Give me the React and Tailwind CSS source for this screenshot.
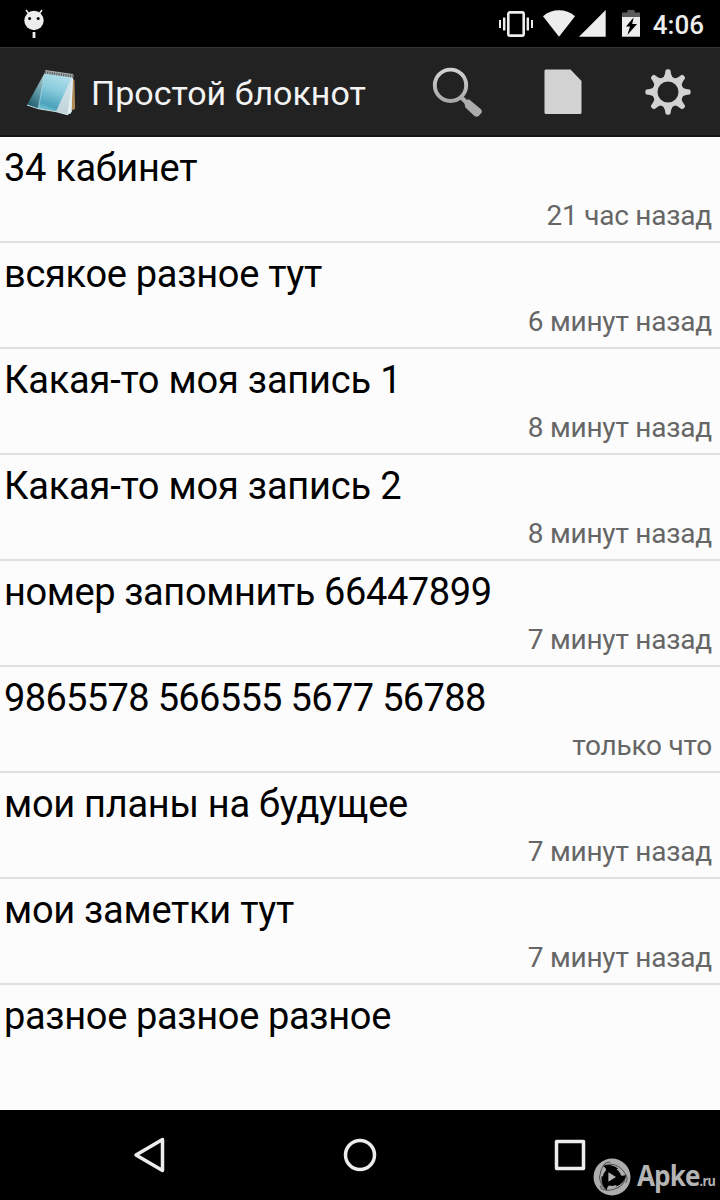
const notes = [
  { title: "34 кабинет", time: "21 час назад", tracking: "tracking-[-0.3px]" },
  { title: "всякое разное тут", time: "6 минут назад", tracking: "tracking-[-0.3px]" },
  { title: "Какая-то моя запись 1", time: "8 минут назад", tracking: "tracking-[-0.2px]" },
  { title: "Какая-то моя запись 2", time: "8 минут назад", tracking: "tracking-[-0.2px]" },
  { title: "номер запомнить 66447899", time: "7 минут назад", tracking: "tracking-[-0.41px]" },
  { title: "9865578 566555 5677 56788", time: "только что", tracking: "tracking-[-0.66px]" },
  { title: "мои планы на будущее", time: "7 минут назад", tracking: "tracking-[-0.28px]" },
  { title: "мои заметки тут", time: "7 минут назад", tracking: "tracking-[-0.28px]" },
  { title: "разное разное разное", tracking: "tracking-[-0.35px]" },
];

const DebugIcon = () => (
  <svg className="w-6 h-8" viewBox="0 0 24 32" fill="#ededed">
    <path d="M4 2l3 4M20 2l-3 4" stroke="#ededed" strokeWidth="1.5" />
    <circle cx="12" cy="12.5" r="9.7" />
    <rect x="10.6" y="24" width="2.8" height="6" />
    <circle cx="7.6" cy="10.4" r="1.5" fill="#000" />
    <circle cx="16.2" cy="10.4" r="1.5" fill="#000" />
  </svg>
);

const VibrateIcon = () => (
  <svg className="w-[34px] h-[26px]" viewBox="0 0 34 26" fill="#ededed">
    <rect x="9.3" y="1.4" width="15.4" height="23.2" rx="1.6" fill="none" stroke="#ededed" strokeWidth="2.6" />
    <rect x="0" y="9" width="2" height="8" />
    <rect x="4" y="6.5" width="2.4" height="13" />
    <rect x="27.6" y="6.5" width="2.4" height="13" />
    <rect x="32" y="9" width="2" height="8" />
  </svg>
);

const WifiIcon = () => (
  <svg className="w-8 h-[27px]" viewBox="0 0 32 27" fill="#ededed">
    <path d="M0 6.2Q7 0.3 16 0.3T32 6.2L16 26.7z" />
  </svg>
);

const SignalIcon = () => (
  <svg className="w-[27px] h-[27px]" viewBox="0 0 27 27" fill="#ededed">
    <path d="M0 26.7L26.7 0v26.7z" />
  </svg>
);

const BatteryIcon = () => (
  <svg className="w-[18px] h-[27px]" viewBox="0 0 18 27">
    <path d="M0 7V2.6h5.4V0h7.2v2.6H18V7z" fill="#5c5c5c" />
    <path d="M0 7h18v19.7H0z" fill="#ededed" />
    <path d="M11.6 7.500L4 16.500h4l-2.600 8.500 9.600-11h-4.800z" fill="#000" />
  </svg>
);

const NotepadIcon = () => (
  <svg className="w-[52px] h-[50px]" viewBox="26 67 52 50">
    <defs>
      <linearGradient id="back" x1="0.7" y1="0" x2="0.3" y2="1">
        <stop offset="0" stopColor="#a9c0c4" />
        <stop offset="0.5" stopColor="#5c97a4" />
        <stop offset="1" stopColor="#1d5a6c" />
      </linearGradient>
      <linearGradient id="page" x1="0.6" y1="0" x2="0.3" y2="1">
        <stop offset="0" stopColor="#b4dfea" />
        <stop offset="0.4" stopColor="#8accdd" />
        <stop offset="0.8" stopColor="#4ba3bc" />
        <stop offset="1" stopColor="#83d3de" />
      </linearGradient>
      <linearGradient id="curl" x1="0" y1="0" x2="0" y2="1">
        <stop offset="0" stopColor="#d3e9ed" />
        <stop offset="1" stopColor="#c0d3d8" />
      </linearGradient>
    </defs>
    <path d="M71.5 78l3 2 .6 29-3.600 1.500z" fill="#b08a55" />
    <path d="M44.500 73L27 105l12 4 5-30z" fill="url(#back)" />
    <path d="M44.500 73l28 4-1.500 37L38 108.600z" fill="url(#page)" />
    <path d="M72 77L56 111.500l11.500 3.500 4-3 1.300-34z" fill="url(#curl)" />
    <path d="M67.500 115l4.500-37 .8 0-1.300 34z" fill="#e6eff1" />
    <path d="M27 105l11.500 3.800L56 111.700l11.500 3" fill="none" stroke="#d8eef2" strokeWidth="0.9" />
    <path d="M44.500 75l-6 33" stroke="#b9dbe2" strokeWidth="0.6" />
    <path d="M45 70.500l28.500 4.200v3l-29-4.200z" fill="#9da5a7" />
    <path d="M45 72l28 4" stroke="#565c5e" strokeWidth="3.200" strokeDasharray="1 1.300" />
    <path d="M45.500 70.500l27.500 4" stroke="#c3c8c9" strokeWidth="0.8" />
  </svg>
);

const SearchIcon = () => (
  <svg className="w-[50px] h-[50px]" viewBox="432 67 50 50">
    <defs>
      <linearGradient id="glass" x1="0" y1="0" x2="0" y2="1">
        <stop offset="0" stopColor="#d2d2d2" />
        <stop offset="1" stopColor="#a8a8a8" />
      </linearGradient>
    </defs>
    <circle cx="450.500" cy="85.300" r="15.700" fill="none" stroke="url(#glass)" strokeWidth="3.900" />
    <path d="M461 97l7 7" stroke="#acacac" strokeWidth="4.500" />
    <path d="M464.500 103.500q-.3-2 1.300-3.200 1.500-1.200 3.400-.8l11.500 9.600q2 2 .7 4l-2.700 3q-2.200 1.500-4.300 0l-9-8.600z" fill="#acacac" />
  </svg>
);

const FileIcon = () => (
  <svg className="w-[38px] h-[46px]" viewBox="0 0 38 46" fill="#d2d2d2">
    <path d="M1.500.5h25L37.500 12v31.500q0 1.500-1.500 1.500H2q-1.500 0-1.500-1.500v-41.500q0-1.500 1-1.500z" />
  </svg>
);

const GearIcon = () => (
  <svg className="w-[46px] h-[46px]" viewBox="-23 -23 46 46" fill="#d2d2d2">
    {[0, 45, 90, 135, 180, 225, 270, 315].map((angle) => (
      <path
        key={angle}
        d="M-6.500-13Q-3.600-15-3.100-18L-2.500-21.500Q-2.200-22.700 0-22.700T2.500-21.500L3.100-18Q3.600-15 6.500-13z"
        transform={`rotate(${angle})`}
      />
    ))}
    <circle r="12.900" fill="none" stroke="#d2d2d2" strokeWidth="4.800" />
  </svg>
);

const Watermark = () => (
  <div className="absolute left-[593px] bottom-0.5 flex items-center text-[#b4b4b4]">
    <svg className="w-[38px] h-[38px]" viewBox="-19 -19 38 38">
      <circle r="18.500" fill="#adadad" />
      <circle r="9" fill="#000" />
      {[0, 120, 240].map((angle) => (
        <g key={angle} transform={`rotate(${angle})`}>
          <path d="M-8-11.500Q3-15.500 10.500-7T13.500 6" fill="none" stroke="#444" strokeWidth="0.9" />
          <path d="M-9-11Q-1-14 6-8.500L0-4-6-5Q-5-9-9-11z" fill="#000" />
        </g>
      ))}
      <path d="M-3.600-4.800L4 0l-7.600 4.800z" fill="#b4b4b4" />
    </svg>
    <div className="ml-1.5 mb-1 flex items-baseline origin-left scale-x-90 font-['Open_Sans',sans-serif] font-bold whitespace-nowrap">
      <span className="text-[29px] leading-[38px] tracking-[-1px]">Apke</span>
      <span className="text-[14px] tracking-[-0.7px]">.ru</span>
    </div>
  </div>
);

const StatusBar = () => (
  <div className="h-[47px] bg-black flex items-center justify-between pl-[22px] pr-4">
    <DebugIcon />
    <div className="flex items-center">
      <VibrateIcon />
      <div className="ml-2.5">
        <WifiIcon />
      </div>
      <div className="ml-1">
        <SignalIcon />
      </div>
      <div className="ml-4">
        <BatteryIcon />
      </div>
      <span className="ml-[13px] pt-0.5 text-[26px] leading-8 font-medium text-[#ededed]">
        4:06
      </span>
    </div>
  </div>
);

const Header = () => (
  <div className="h-[90px] bg-[#222222] border-t border-[#333333] border-b-2 border-b-[#151515] flex items-center">
    <div className="ml-[26px]">
      <NotepadIcon />
    </div>
    <h1 className="ml-[13px] pt-0.5 flex-1 text-[34px] leading-10 text-[#f3f3f3] whitespace-nowrap">
      Простой блокнот
    </h1>
    <button className="w-[105px] pr-0.5 flex justify-center">
      <SearchIcon />
    </button>
    <button className="w-[105px] flex justify-center">
      <FileIcon />
    </button>
    <button className="w-[105px] flex justify-center">
      <GearIcon />
    </button>
  </div>
);

const NoteItem = ({ title, time, tracking }) => (
  <li className="h-[106px] border-b-2 last:border-b-0 border-[#dfdfdf] pl-1 pr-2">
    <p className={`pt-2 text-[38px] leading-[46px] text-black whitespace-nowrap ${tracking}`}>
      {title}
    </p>
    <p className="pt-[9px] text-[28px] leading-8 tracking-[-0.22px] text-[#666666] text-right">
      {time}
    </p>
  </li>
);

const NavBar = () => (
  <div className="h-[90px] bg-black flex items-center justify-center gap-[172px]">
    <svg className="w-[38px] h-[38px]" viewBox="0 0 38 38" fill="none" stroke="#ededed" strokeWidth="3.500" strokeLinejoin="round">
      <path d="M5 19L31.500 3.500v31z" />
    </svg>
    <svg className="w-[38px] h-[38px]" viewBox="0 0 38 38" fill="none" stroke="#ededed" strokeWidth="3.500">
      <circle cx="19" cy="19" r="14.500" />
    </svg>
    <svg className="w-[38px] h-[38px]" viewBox="0 0 38 38" fill="none" stroke="#ededed" strokeWidth="3.500" strokeLinejoin="round">
      <rect x="5.500" y="5.500" width="27" height="27" />
    </svg>
  </div>
);

export default function App() {
  return (
    <div className="relative w-[720px] h-[1200px] overflow-hidden flex flex-col bg-[#fcfcfc] font-[Roboto,sans-serif]">
      <StatusBar />
      <Header />
      <ul className="flex-1 min-h-0 overflow-hidden">
        {notes.map((note) => (
          <NoteItem key={note.title} {...note} />
        ))}
      </ul>
      <NavBar />
      <Watermark />
    </div>
  );
}
